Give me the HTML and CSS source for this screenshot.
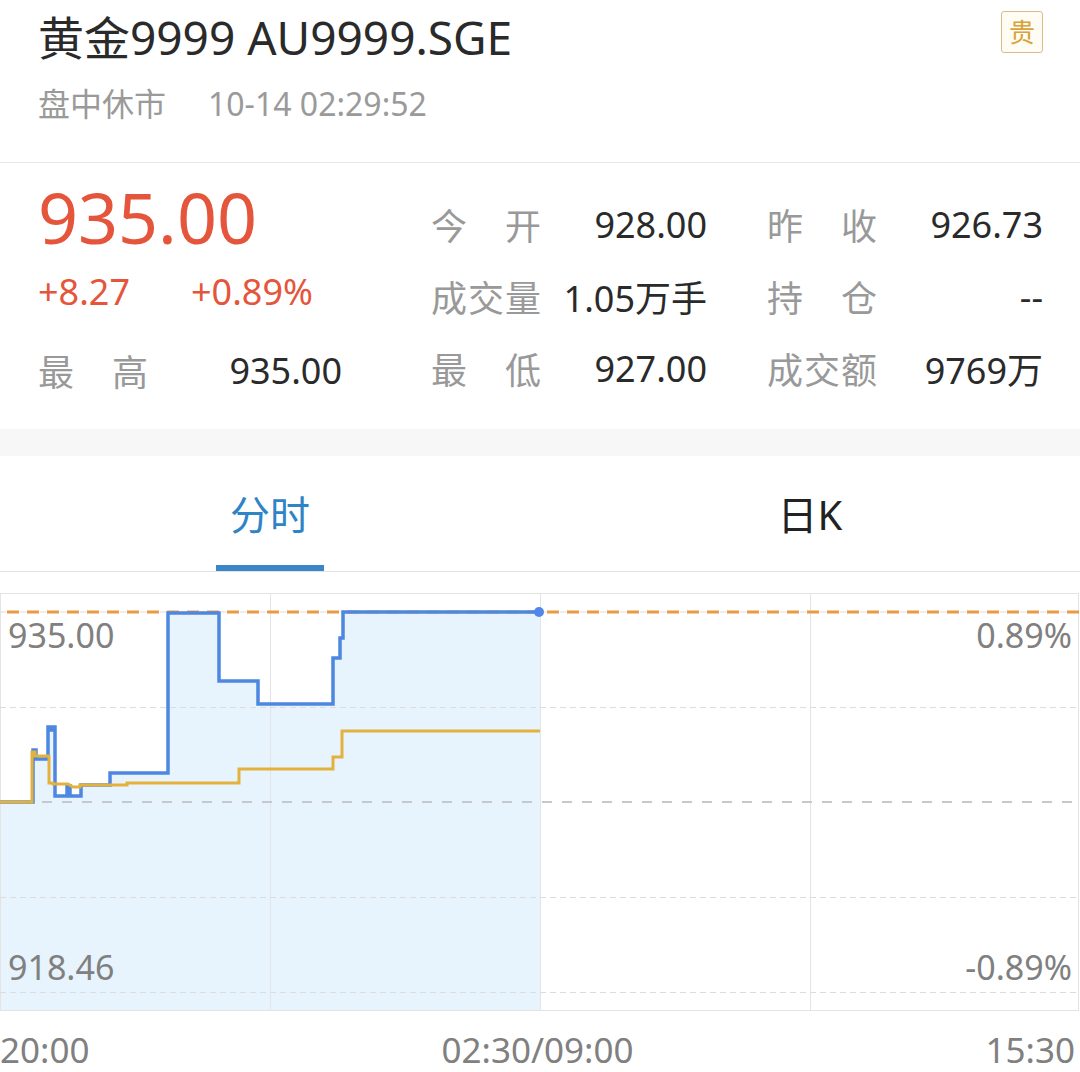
FILE: index.html
```html
<!DOCTYPE html>
<html lang="zh-CN">
<head>
    <meta charset="UTF-8">
    <title>黄金9999 AU9999.SGE</title>
    <link rel="stylesheet" href="styles.css">
</head>
<body>
    <header class="head">
        <div>
            <h1 class="name">黄金9999 AU9999.SGE</h1>
            <div class="status"><span>盘中休市</span><span class="time">10-14 02:29:52</span></div>
        </div>
        <span class="badge">贵</span>
    </header>

    <section class="quote">
        <div class="quote-main">
            <div class="price">935.00</div>
            <div class="change"><span>+8.27</span><span>+0.89%</span></div>
            <div class="stat"><span class="label">最高</span><span class="value">935.00</span></div>
        </div>
        <div class="quote-grid">
            <div class="stat"><span class="label">今开</span><span class="value">928.00</span></div>
            <div class="stat"><span class="label">昨收</span><span class="value">926.73</span></div>
            <div class="stat"><span class="label">成交量</span><span class="value">1.05万手</span></div>
            <div class="stat"><span class="label">持仓</span><span class="value">--</span></div>
            <div class="stat"><span class="label">最低</span><span class="value">927.00</span></div>
            <div class="stat"><span class="label">成交额</span><span class="value">9769万</span></div>
        </div>
    </section>

    <div class="gap"></div>

    <nav class="tabs">
        <div class="tab active"><span>分时</span><i class="bar"></i></div>
        <div class="tab"><span>日K</span></div>
    </nav>

    <svg class="chart" width="1080" height="442" viewBox="0 572 1080 442">
        <path class="area" d="M0,802 H33 V750 H36 V759 H48 V727 H51 V730 H53 V727 H55 V796 H67 V786 H70 V796 H81 V785 H110 V773 H168 V613 H219 V681 H258 V704 H333 V658 H340 V638 H343 V612 H540 V1010 H0 Z"/>

        <line class="frame" x1="0" y1="593.5" x2="1079" y2="593.5"/>
        <line class="frame" x1="0" y1="1010.5" x2="1079" y2="1010.5"/>
        <line class="frame" x1="0.5" y1="594" x2="0.5" y2="1010"/>
        <line class="frame" x1="1078.5" y1="594" x2="1078.5" y2="1010"/>
        <line class="vgrid" x1="270.5" y1="594" x2="270.5" y2="1010"/>
        <line class="vgrid" x1="540.5" y1="594" x2="540.5" y2="1010"/>
        <line class="vgrid" x1="810.5" y1="594" x2="810.5" y2="1010"/>

        <line class="hgrid" x1="0" y1="612" x2="1079" y2="612"/>
        <line class="hgrid" x1="0" y1="707.5" x2="1079" y2="707.5"/>
        <line class="hgrid" x1="0" y1="897.5" x2="1079" y2="897.5"/>
        <line class="hgrid" x1="0" y1="992.5" x2="1079" y2="992.5"/>
        <line class="base" x1="0" y1="802" x2="1079" y2="802"/>
        <line class="high" x1="0" y1="612" x2="1079" y2="612"/>

        <path class="line" d="M0,802 H33 V750 H36 V759 H48 V727 H51 V730 H53 V727 H55 V796 H67 V786 H70 V796 H81 V785 H110 V773 H168 V613 H219 V681 H258 V704 H333 V658 H340 V638 H343 V612 H540"/>
        <path class="avg" d="M0,802 H32 V752 H35 V756 H49 V783 H53 V784 H68 L73,787 H80 V785 H127 V783 H239 V769 H333 V757 H342 V731 H540"/>
        <circle class="dot" cx="539" cy="612" r="5"/>

        <text class="tick" x="8" y="648">935.00</text>
        <text class="tick" x="1072" y="648" text-anchor="end">0.89%</text>
        <text class="tick" x="8" y="980">918.46</text>
        <text class="tick" x="1072" y="980" text-anchor="end">-0.89%</text>
    </svg>

    <div class="axis">
        <span>20:00</span>
        <span class="mid">02:30/09:00</span>
        <span class="end">15:30</span>
    </div>
</body>
</html>
```

FILE: styles.css
```css
body {
    margin: 0;
    width: 1080px;
    background: #fff;
    color: #222;
    font-family: "Noto Sans", "Noto Sans CJK SC", sans-serif;
}
.head {
    display: flex;
    justify-content: space-between;
    align-items: flex-start;
    padding: 9px 37px 36px 38px;
    border-bottom: 1px solid #e8e8e8;
}
.name {
    margin: 0;
    font-size: 46px;
    font-weight: normal;
    line-height: 56px;
    color: #2a2a2a;
}
.status {
    margin-top: 17px;
    font-size: 32px;
    line-height: 44px;
    color: #9a9a9a;
}
.status .time {
    margin-left: 42px;
}
.badge {
    margin-top: 2px;
    width: 42px;
    height: 42px;
    box-sizing: border-box;
    border: 1px solid #dcbb86;
    border-radius: 3px;
    background: #fffcf3;
    color: #d9a23a;
    font-size: 26px;
    line-height: 40px;
    text-align: center;
}

.quote {
    display: flex;
    padding: 14px 37px 23px 38px;
}
.quote-main {
    flex: 1;
}
.price {
    font-size: 70px;
    line-height: 80px;
    color: #e5553b;
}
.change {
    font-size: 36px;
    line-height: 70px;
    color: #e5553b;
}
.change span:first-child {
    display: inline-block;
    width: 153px;
}
.stat {
    display: flex;
    justify-content: space-between;
    align-items: center;
    height: 72px;
    font-size: 36px;
    color: #2a2a2a;
}
.quote-main .stat {
    width: 304px;
    margin-top: 7px;
}
.label {
    width: 110px;
    color: #999;
    text-align: justify;
    text-align-last: justify;
}
.quote-grid {
    display: grid;
    grid-template-columns: 276px 276px;
    column-gap: 60px;
    align-content: start;
    margin-top: 11px;
}

.gap {
    height: 27px;
    background: #f7f7f7;
}

.tabs {
    display: flex;
    height: 116px;
    box-sizing: border-box;
    border-bottom: 1px solid #e3e3e3;
}
.tab {
    flex: 1;
    display: flex;
    flex-direction: column;
    align-items: center;
    padding-top: 31px;
    font-size: 40px;
    line-height: 56px;
    color: #222;
}
.tab.active {
    color: #2f84c6;
}
.tab .bar {
    margin-top: auto;
    width: 108px;
    height: 6px;
    background: #3b86c8;
}

.chart {
    display: block;
}
.area {
    fill: #e7f3fd;
}
.frame {
    stroke: #e4e4e4;
    stroke-width: 1;
}
.vgrid {
    stroke: #e2e4e6;
    stroke-width: 1;
}
.hgrid {
    stroke: #dcdcdc;
    stroke-width: 1;
    stroke-dasharray: 6 4;
}
.base {
    stroke: #c5c8cc;
    stroke-width: 2;
    stroke-dasharray: 10 10;
    stroke-dashoffset: -2;
}
.high {
    stroke: #e99a45;
    stroke-width: 3;
    stroke-dasharray: 12 8;
    stroke-dashoffset: -7;
}
.avg {
    fill: none;
    stroke: #e3b23c;
    stroke-width: 3;
}
.line {
    fill: none;
    stroke: #4d87e0;
    stroke-width: 3.5;
}
.dot {
    fill: #4f87ec;
}
.tick {
    font-size: 34px;
    fill: #808080;
}

.axis {
    display: grid;
    grid-template-columns: 1fr auto 1fr;
    padding: 14px 5px 0 0;
    font-size: 35px;
    line-height: 44px;
    color: #808080;
}
.axis .mid {
    text-align: center;
}
.axis .end {
    text-align: right;
}
```
